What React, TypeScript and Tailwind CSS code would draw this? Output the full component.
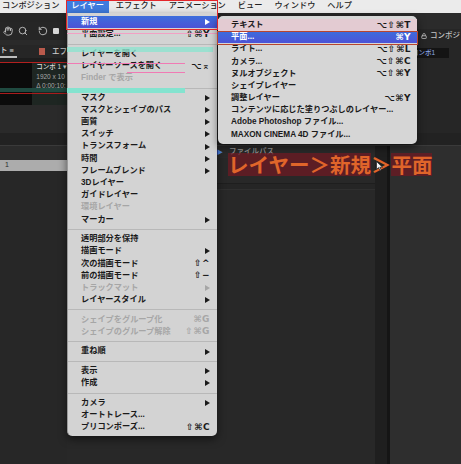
import { Hand, Search, RotateCcw, Lock } from 'lucide-react';
import clsx from 'clsx';

type Entry =
  | { label: string; shortcut?: string; sub?: boolean; disabled?: boolean; active?: boolean; tint?: boolean }
  | 'sep';

const layerMenu: Entry[] = [
  { label: '新規', sub: true, active: true },
  { label: '平面設定...', shortcut: '⇧⌘Y' },
  'sep',
  { label: 'レイヤーを開く' },
  { label: 'レイヤーソースを開く', shortcut: '⌥⌅' },
  { label: 'Finder で表示', disabled: true },
  'sep',
  { label: 'マスク', sub: true },
  { label: 'マスクとシェイプのパス', sub: true },
  { label: '画質', sub: true },
  { label: 'スイッチ', sub: true },
  { label: 'トランスフォーム', sub: true },
  { label: '時間', sub: true },
  { label: 'フレームブレンド', sub: true },
  { label: '3Dレイヤー' },
  { label: 'ガイドレイヤー' },
  { label: '環境レイヤー', disabled: true },
  { label: 'マーカー', sub: true },
  'sep',
  { label: '透明部分を保持' },
  { label: '描画モード', sub: true },
  { label: '次の描画モード', shortcut: '⇧^' },
  { label: '前の描画モード', shortcut: '⇧−' },
  { label: 'トラックマット', sub: true, disabled: true },
  { label: 'レイヤースタイル', sub: true },
  'sep',
  { label: 'シェイプをグループ化', shortcut: '⌘G', disabled: true },
  { label: 'シェイプのグループ解除', shortcut: '⇧⌘G', disabled: true },
  'sep',
  { label: '重ね順', sub: true },
  'sep',
  { label: '表示', sub: true },
  { label: '作成', sub: true },
  'sep',
  { label: 'カメラ', sub: true },
  { label: 'オートトレース...' },
  { label: 'プリコンポーズ...', shortcut: '⇧⌘C' },
];

const newMenu: Entry[] = [
  { label: 'テキスト', shortcut: '⌥⇧⌘T', tint: true },
  { label: '平面...', shortcut: '⌘Y', active: true },
  { label: 'ライト...', shortcut: '⌥⇧⌘L' },
  { label: 'カメラ...', shortcut: '⌥⇧⌘C' },
  { label: 'ヌルオブジェクト', shortcut: '⌥⇧⌘Y' },
  { label: 'シェイプレイヤー' },
  { label: '調整レイヤー', shortcut: '⌥⌘Y' },
  { label: 'コンテンツに応じた塗りつぶしのレイヤー...' },
  { label: 'Adobe Photoshop ファイル...' },
  { label: 'MAXON CINEMA 4D ファイル...' },
];

const menuBar = ['コンポジション', 'レイヤー', 'エフェクト', 'アニメーション', 'ビュー', 'ウィンドウ', 'ヘルプ'];

function Arrow() {
  return (
    <svg width="5" height="6" viewBox="0 0 5 6" className="ml-1 shrink-0">
      <polygon points="0,0 5,3 0,6" fill="currentColor" />
    </svg>
  );
}

function MenuRow({ entry, pr }: { entry: Entry; pr: string }) {
  if (entry === 'sep') {
    return (
      <div className="h-[7.4px] flex items-center">
        <div className="h-px w-full bg-[#b8b8b8]" />
      </div>
    );
  }
  return (
    <div
      className={clsx(
        'h-[12.2px] flex items-center pl-[13px] leading-none',
        pr,
        entry.active
          ? 'bg-linear-to-b from-[#3a6ddc] to-[#4c52d6] text-white'
          : entry.disabled
            ? 'text-[#a6a6a6]'
            : 'text-[#1a1a1a]',
        entry.tint && 'bg-[#e3cbd2]'
      )}
    >
      <span className="flex-1 whitespace-nowrap">{entry.label}</span>
      {entry.shortcut && (
        <span className="whitespace-nowrap text-[9px] tracking-[0.5px] font-['DejaVu_Sans','Noto_Sans_CJK_JP',sans-serif] font-semibold">
          {entry.shortcut}
        </span>
      )}
      {entry.sub && <Arrow />}
    </div>
  );
}

export default function App() {
  return (
    <div className="relative w-[461px] h-[464px] overflow-hidden bg-[#262626] font-['Liberation_Sans','Noto_Sans_CJK_JP',sans-serif] text-[8.2px] font-semibold">
      {/* Menu bar */}
      <div className="h-[13px] bg-[#ebebeb] flex items-center pl-[2px] gap-[12px] text-[#222] leading-none font-medium">
        {menuBar.map((m) =>
          m === 'レイヤー' ? (
            <span key={m} className="h-full flex items-center px-[5px] mx-[-5px] bg-[#3f7bdf] text-white">
              {m}
            </span>
          ) : (
            <span key={m}>{m}</span>
          )
        )}
      </div>

      {/* Top panels */}
      <div className="h-[120px] flex font-medium">
        {/* Project panel */}
        <div className="w-[67px] flex flex-col overflow-hidden">
          <div className="h-[9px] bg-[#252525]" />
          <div className="h-[18px] flex items-center gap-[5px] pl-[3px] text-[#cfcfcf] bg-[#262626]">
            <Hand size={10} strokeWidth={2} />
            <Search size={10} strokeWidth={2} />
            <RotateCcw size={10} strokeWidth={2} className="ml-[5px]" />
            <div className="w-[6px] h-[6px] bg-[#d6d6d6] rounded-[1px]" />
          </div>
          <div className="h-[5px] bg-[#2a2a2a]" />
          <div className="h-[13px] flex items-center text-[#cfcfcf] text-[7.5px] bg-[#262626]">
            <div className="w-[18px] h-full flex items-center border-b-2 border-[#bdbdbd]">ト ≡</div>
            <div className="ml-[22px] w-[6px] h-[7px] bg-[#b95a4c]" />
            <span className="ml-[7px] whitespace-nowrap">エフ</span>
          </div>
          <div className="h-[5px] bg-[#1d1d1d]" />
          <div className="h-[42px] flex bg-[#1e2622]">
            <div className="w-[33px] bg-[#0b0b0b]" />
            <div className="pl-[4px] pt-[1px] flex flex-col gap-[3px] text-[6.5px] leading-none whitespace-nowrap text-[#a8a8a8]">
              <span className="text-[#dcdcdc]">コンポ 1 ▾</span>
              <span>1920 x 10</span>
              <span>Δ 0;00;10;</span>
            </div>
          </div>
          <div className="flex-1 bg-[#2a2a2a]" />
        </div>

        <div className="flex-1 bg-[#262626]" />

        {/* Composition panel */}
        <div className="w-[71px] flex flex-col bg-[#262626] pl-[27px] overflow-hidden">
          <div className="h-[16px] bg-[#2b2b2b] -ml-[27px]" />
          <div className="h-[14px] flex items-center gap-[3px] pl-[4px] text-[#c4c4c4] text-[7.5px] whitespace-nowrap">
            <Lock size={6} strokeWidth={3} />
            <span>コンポジ</span>
          </div>
          <div className="mt-[5px] h-[10px] w-[32px] bg-[#141414] flex items-center text-[6.5px] text-[#8eaaec] whitespace-nowrap overflow-hidden">
            <span className="-ml-[5px]">コンポ1</span>
          </div>
        </div>
      </div>

      {/* Divider between panel rows */}
      <div className="h-[13px] bg-[#222] border-b border-[#3a3a3a]" />

      {/* Timeline */}
      <div className="h-[318px] flex font-medium">
        <div className="w-[67px] flex flex-col">
          <div className="h-[14px] bg-[#2b2b2b]" />
          <div className="h-[11px] bg-[#acacac] text-[#2a2a2a] text-[7px] flex items-center pl-[5px]">1</div>
          <div className="flex-1 bg-[#272727]" />
        </div>
        <div className="flex-1 flex flex-col">
          <div className="h-[12px] bg-[#2a2a2a] flex items-center pl-[150px] gap-[6px] text-[7.5px] text-[#9c9c9c]">
            <span className="text-[#4f86e8] text-[6px]">▶</span>
            <span>ファイルパス</span>
          </div>
          <div className="h-[26px] bg-[#282828] border-b border-[#1e1e1e]" />
          <div className="h-[6px] bg-[#252525] border-b border-[#2f2f2f]" />
          <div className="flex-1 bg-[#282828]" />
        </div>
        <div className="w-[12px] bg-[#1f1f1f]" />
        <div className="w-[3px] bg-[#151515]" />
        <div className="w-[71px] bg-[#2e2e2e]" />
      </div>

      {/* Annotation artifacts on the left */}
      <div className="absolute left-0 top-[62px] w-[67px] h-px bg-[#b3201f]" />
      <div className="absolute left-0 top-[88px] w-[67px] h-[4px] bg-[#1f4a40]" />
      <div className="absolute left-0 top-[93px] w-[67px] h-px bg-[#a81c1c]" />

      {/* Layer menu */}
      <div className="absolute left-[67px] top-[13px] w-[150px] py-[3px] bg-[#d3d3d3] rounded-b-[5px] shadow-[0_3px_8px_rgba(0,0,0,0.55)] border-l border-[#9a9a9a]">
        {layerMenu.map((e, i) => (
          <MenuRow key={i} entry={e} pr="pr-[7px]" />
        ))}
      </div>

      {/* Menu artifacts */}
      <div className="absolute left-[67px] top-[33px] w-[150px] h-px bg-[#f2a0c4]" />
      <div className="absolute left-[67px] top-[47px] w-[146px] h-[5px] bg-[#8fe3cf]/80" />
      <div className="absolute left-[67px] top-[63px] w-[118px] h-px bg-[#f07ab4]" />
      <div className="absolute left-[127px] top-[72px] w-[58px] h-px bg-[#f07ab4]" />
      <div className="absolute left-[67px] top-[88px] w-[118px] h-[5px] bg-[#84e3cf]" />

      {/* 新規 submenu */}
      <div className="absolute left-[218px] top-[16px] w-[199px] py-[3px] bg-[#d6d6d6] rounded-[5px] shadow-[0_3px_8px_rgba(0,0,0,0.55)]">
        {newMenu.map((e, i) => (
          <MenuRow key={i} entry={e} pr="pr-[6px]" />
        ))}
      </div>

      {/* Red highlight boxes */}
      <div className="absolute left-[66px] top-0 w-[152px] h-[30px] border-[1.5px] border-[#e3262b]" />
      <div className="absolute left-[217px] top-[31px] w-[201px] h-[14px] border-[1.5px] border-[#b8452e]" />

      {/* Caption */}
      <div className="absolute left-[228px] top-[153px] flex items-center font-['Noto_Sans_CJK_JP',sans-serif] text-[20.5px] font-bold leading-[23px] text-[#e0652a]">
        <span className="bg-[#6e1923]/75">レイヤー＞新規</span>
        <span>＞</span>
        <span className="bg-[#6e1923]/75">平面</span>
      </div>

      {/* Mouse pointer */}
      <svg className="absolute left-[376px] top-[161px]" width="7" height="10" viewBox="0 0 7 10">
        <path d="M0.5 0.5 L0.5 8.5 L2.5 6.6 L4 9.5 L5.2 9 L3.8 6.2 L6.5 6.2 Z" fill="#f4f4f4" stroke="#222" strokeWidth="0.7" />
      </svg>
    </div>
  );
}
